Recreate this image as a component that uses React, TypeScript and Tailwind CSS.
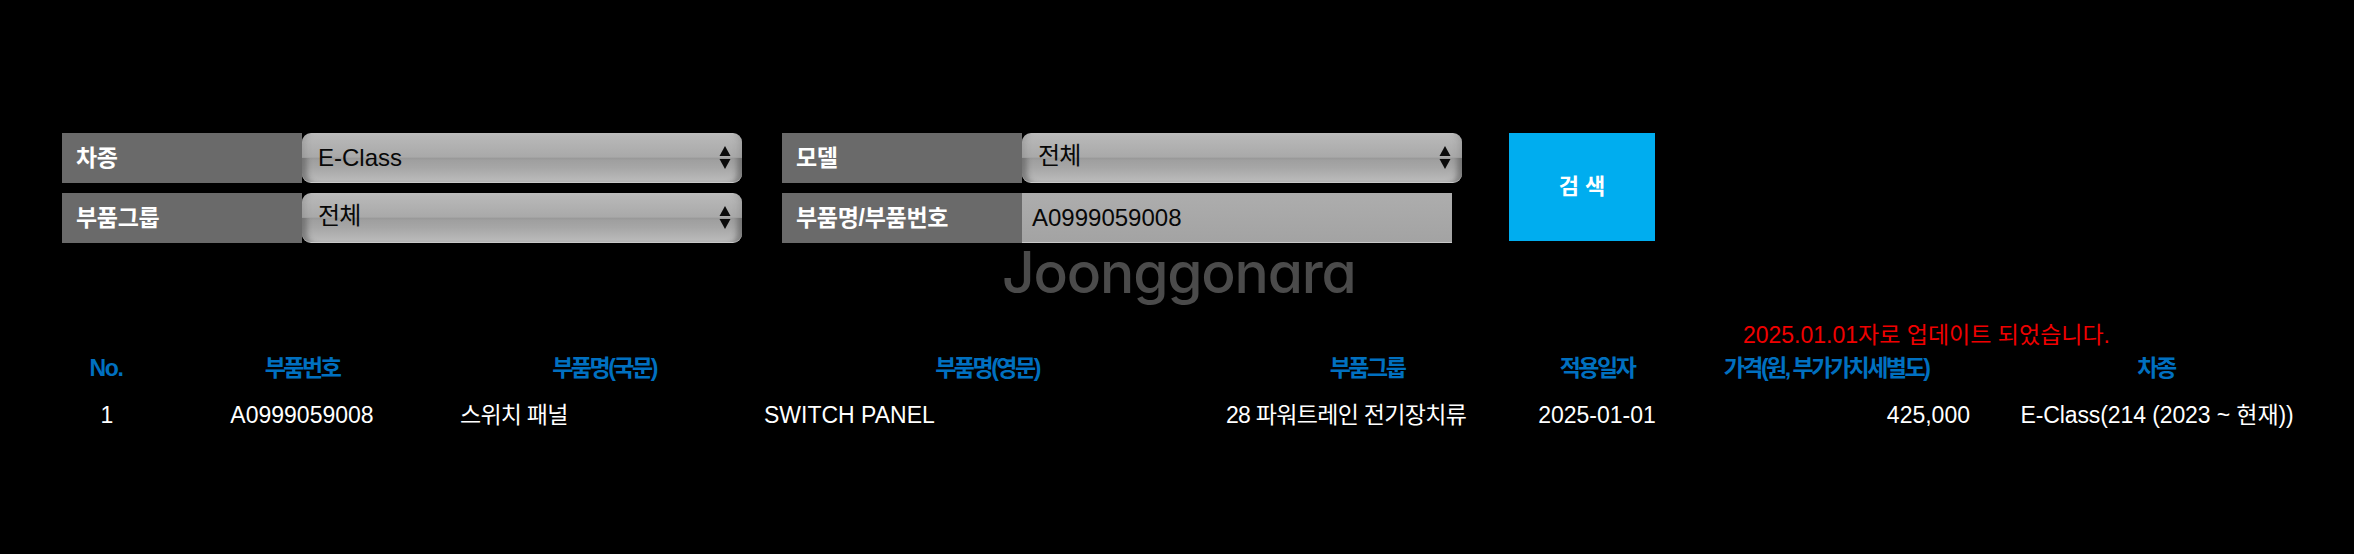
const sans = "font-['Liberation_Sans','Noto_Sans_CJK_KR',sans-serif]";

function Arrows() {
  return (
    <svg width="12" height="23" viewBox="0 0 12 23" className="relative shrink-0">
      <polygon points="6,0 11.5,10 0.5,10" fill="#0c0c0c" />
      <polygon points="0.5,13 11.5,13 6,23" fill="#0c0c0c" />
    </svg>
  );
}

function Label({ children }: { children: React.ReactNode }) {
  return (
    <div className="flex h-[50px] w-[240px] shrink-0 items-center bg-[#6a6a6a] pl-[14px] text-[23px] font-bold tracking-[-0.3px] text-white">
      {children}
    </div>
  );
}

function Select({ value, korean }: { value: string; korean?: boolean }) {
  return (
    <div className="relative flex h-[50px] w-[440px] items-center justify-between rounded-[9px] border-b border-[#c8c8c8] bg-[linear-gradient(180deg,#c2c2c2_0%,#b8b8b8_6%,#a9a9a9_49%,#9d9d9d_51%,#a6a6a6_70%,#bcbcbc_100%)] pl-[16px] pr-[11px] shadow-[inset_8px_0_6px_-5px_rgba(110,110,110,0.3),inset_-8px_0_6px_-5px_rgba(110,110,110,0.3)]">
      <div className="absolute inset-x-0 bottom-0 top-1/2 rounded-b-[9px] shadow-[inset_9px_0_5px_-4px_rgba(90,90,90,0.5),inset_-9px_0_5px_-4px_rgba(90,90,90,0.5)]" />
      <span className={`relative text-[24px] text-[#080808] ${korean ? "-mt-[3px] tracking-[-0.8px]" : ""}`}>{value}</span>
      <Arrows />
    </div>
  );
}

const rows = "grid grid-cols-[88px_304px_300px_466px_294px_166px_292px_368px]";

export default function App() {
  return (
    <div className={`${sans} relative h-[554px] w-[2354px] overflow-hidden bg-black`}>
      <div className="flex pl-[62px] pt-[133px]">
        <div className="flex w-[720px] flex-col gap-[10px]">
          <div className="flex">
            <Label>차종</Label>
            <Select value="E-Class" />
          </div>
          <div className="flex">
            <Label>부품그룹</Label>
            <Select value="전체" korean />
          </div>
        </div>
        <div className="flex w-[727px] flex-col gap-[10px]">
          <div className="flex">
            <Label>모델</Label>
            <Select value="전체" korean />
          </div>
          <div className="flex">
            <Label>부품명/부품번호</Label>
            <div className="flex h-[50px] w-[430px] items-center border-b border-[#c8c8c8] bg-gradient-to-b from-[#adadad] to-[#a3a3a3] pl-[10px] text-[24px] text-[#080808]">
              A0999059008
            </div>
          </div>
        </div>
        <div className="flex h-[108px] w-[146px] items-center justify-center bg-[#00adef] pb-[2px] text-[22px] font-bold text-white">
          검 색
        </div>
      </div>

      <div className="absolute left-[1002px] top-[235px] font-['Inter',sans-serif] text-[57px] font-medium leading-[76px] tracking-[-1.2px] text-[#4b4b4b] [font-feature-settings:'cv11']">
        Joonggonara
      </div>

      <div className="mt-[80px] pl-[62px]">
        <div className="flex h-[24px] justify-end pr-[244px] text-[23px] leading-[24px] text-[#f00000]">
          2025.01.01자로 업데이트 되었습니다.
        </div>
        <div className={`${rows} mt-[4px] h-[32px] items-center text-center text-[23px] font-bold tracking-[-2.5px] text-[#0070c0]`}>
          <div className="tracking-[-1.4px]">No.</div>
          <div>부품번호</div>
          <div>부품명(국문)</div>
          <div>부품명(영문)</div>
          <div>부품그룹</div>
          <div>적용일자</div>
          <div>가격(원, 부가가치세별도)</div>
          <div>차종</div>
        </div>
        <div className={`${rows} mt-[15px] h-[32px] items-center text-[23px] text-white`}>
          <div className="pl-[2px] text-center">1</div>
          <div className="text-center">A0999059008</div>
          <div className="pl-[6px] tracking-[-0.75px]">스위치 패널</div>
          <div className="pl-[10px]">SWITCH PANEL</div>
          <div className="pl-[6px] tracking-[-0.7px]">28 파워트레인 전기장치류</div>
          <div className="text-center">2025-01-01</div>
          <div className="pr-[2px] text-right">425,000</div>
          <div className="pl-[2px] text-center tracking-[-0.1px]">E-Class(214 (2023 ~ 현재))</div>
        </div>
      </div>
    </div>
  );
}
